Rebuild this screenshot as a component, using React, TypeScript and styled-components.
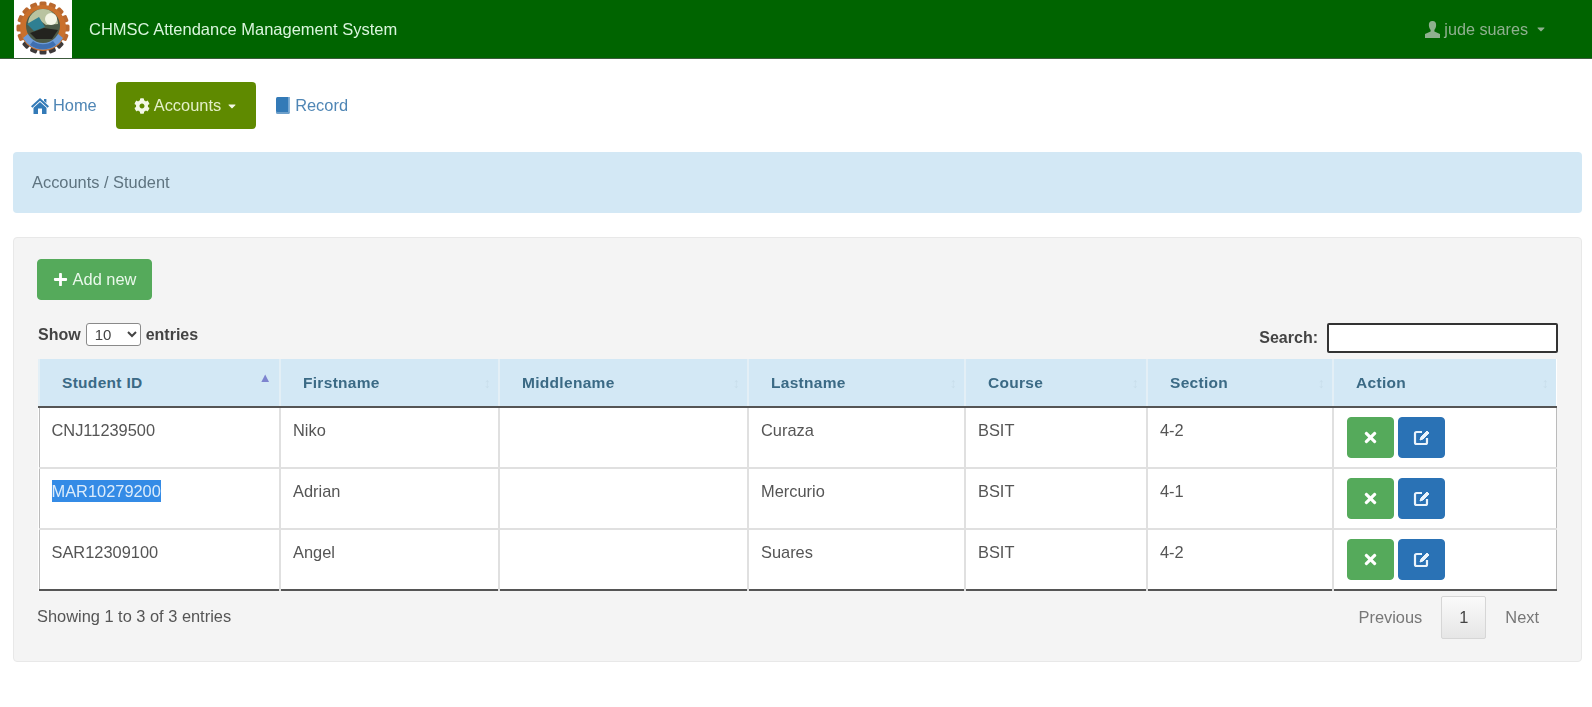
import React from 'react';
import styled, { createGlobalStyle } from 'styled-components';
import { FaCaretDown, FaCog, FaPlus, FaTimes } from 'react-icons/fa';

const Global = createGlobalStyle`
  html, body { margin: 0; padding: 0; background: #fff; }
  body {
    font-family: "Liberation Sans", Arial, sans-serif;
    font-size: 16.4px;
    color: #555;
  }
`;

// the reference is a frame out of a video, everything is a bit soft
const Page = styled.div`
  filter: blur(0.4px);
`;

const Navbar = styled.header`
  display: flex;
  align-items: center;
  justify-content: space-between;
  height: 59px;
  box-sizing: border-box;
  padding: 0 45px 0 14px;
  background: #006400;
  border-bottom: 1px solid #3c5a3c;
`;

const Brand = styled.div`
  display: flex;
  align-items: center;
  gap: 17px;
  height: 100%;
  color: #d9f5dc;
  font-size: 16.5px;
`;

const Logo = styled.svg`
  display: block;
  width: 58px;
  height: 58px;
  background: #fff;
`;

const UserMenu = styled.div`
  display: flex;
  align-items: center;
  gap: 3px;
  color: #8fb08f;
  font-size: 16.2px;
`;

const Tabs = styled.nav`
  display: flex;
  align-items: center;
  gap: 1px;
  margin: 23px 0;
  padding-left: 13px;
`;

const Tab = styled.a<{ $active?: boolean }>`
  display: flex;
  align-items: center;
  gap: 4px;
  height: 47px;
  box-sizing: border-box;
  padding: 0 18px;
  border-radius: 4px;
  font-size: 16.4px;
  color: ${(p) => (p.$active ? '#e4efc8' : '#4f86b5')};
  background: ${(p) => (p.$active ? '#5f8a00' : 'transparent')};
  svg { color: ${(p) => (p.$active ? '#f4f8e6' : '#337ab7')}; }
`;

const Breadcrumb = styled.div`
  display: flex;
  align-items: center;
  height: 61px;
  box-sizing: border-box;
  margin: 0 10px 24px 13px;
  padding-left: 19px;
  background: #d3e8f5;
  border-radius: 4px;
  color: #5f7480;
`;

const Well = styled.section`
  height: 425px;
  box-sizing: border-box;
  margin: 0 10px 0 13px;
  padding: 21px 23px 0;
  background: #f4f4f4;
  border: 1px solid #e8e8e8;
  border-radius: 4px;
`;

const Button = styled.button<{ $color: string; $width: number }>`
  display: inline-flex;
  align-items: center;
  justify-content: center;
  gap: 5px;
  width: ${(p) => p.$width}px;
  height: 41px;
  padding: 0;
  border: 1px solid ${(p) => p.$color};
  border-radius: 4px;
  background: ${(p) => p.$color};
  color: #e9f8ea;
  font: inherit;
`;

const Controls = styled.div`
  display: flex;
  justify-content: space-between;
  align-items: flex-start;
  height: 59px;
  padding-top: 23px;
  box-sizing: border-box;
  margin-left: 1px;
  font-weight: bold;
  font-size: 16px;
  color: #444;
`;

const Length = styled.label`
  display: flex;
  align-items: center;
  gap: 5px;
  height: 23px;
`;

const Select = styled.select`
  width: 55px;
  height: 23px;
  box-sizing: border-box;
  padding: 0 0 0 4px;
  border: 1px solid #8a8a8a;
  border-radius: 3px;
  background: #fff;
  color: #444;
  font: 15px "Liberation Sans", Arial, sans-serif;
`;

const Search = styled.label`
  display: flex;
  align-items: center;
  gap: 9px;
  height: 30px;
`;

const SearchInput = styled.input`
  width: 231px;
  height: 30px;
  box-sizing: border-box;
  border: 2px solid #333;
  border-radius: 2px;
  background: #fff;
`;

const Table = styled.table`
  width: 1517px;
  table-layout: fixed;
  border-collapse: collapse;
  margin-left: 1px;
  background: #fff;
  border-bottom: 2px solid #555;
`;

const Col = styled.col<{ $width: number }>`
  width: ${(p) => p.$width}px;
`;

const HeadCell = styled.th`
  position: relative;
  height: 48px;
  box-sizing: border-box;
  padding: 0 0 0 22px;
  background: #d3e8f5;
  border-left: 2px solid #e3eff6;
  border-bottom: 2px solid #555;
  color: #3b6a85;
  font-size: 15.5px;
  letter-spacing: 0.3px;
  text-align: left;
`;

const SortMark = styled.span<{ $active?: boolean }>`
  position: absolute;
  right: 7px;
  top: ${(p) => (p.$active ? 11 : 16)}px;
  font-size: ${(p) => (p.$active ? 13 : 14)}px;
  color: ${(p) => (p.$active ? '#7d84cf' : '#c9deeb')};
`;

const Cell = styled.td`
  height: 61px;
  box-sizing: border-box;
  padding: 13px 12px 0;
  vertical-align: top;
  border: 2px solid #e0e0e0;
  border-top-width: 0;
  color: #555;
  &:first-child { border-left: 1px solid #bbb; }
  &:last-child { border-right: 1px solid #bbb; padding-top: 9px; }
  tr:last-child & { border-bottom: 0; }
`;

const Actions = styled.div`
  display: flex;
  gap: 4px;
  margin-left: 1px;
`;

const Selected = styled.span`
  background: #348be6;
  color: #dcecfb;
  padding: 2px 0;
`;

const Footer = styled.div`
  display: flex;
  justify-content: space-between;
  align-items: flex-start;
  padding-top: 5px;
`;

const Info = styled.div`
  padding-top: 11px;
  color: #555;
`;

const Pager = styled.div`
  display: flex;
  align-items: center;
  color: #777;
`;

const PageLink = styled.span`
  padding: 0 19px;
`;

const PageCurrent = styled.span`
  display: flex;
  align-items: center;
  justify-content: center;
  width: 45px;
  height: 43px;
  box-sizing: border-box;
  border: 1px solid #d6d6d6;
  border-radius: 2px;
  background: linear-gradient(#fafafa, #e6e6e6);
  color: #444;
`;

const columns = [
  { name: 'Student ID', width: 241 },
  { name: 'Firstname', width: 219 },
  { name: 'Middlename', width: 249 },
  { name: 'Lastname', width: 217 },
  { name: 'Course', width: 182 },
  { name: 'Section', width: 186 },
  { name: 'Action', width: 223 },
];

const students = [
  { id: 'CNJ11239500', first: 'Niko', last: 'Curaza', course: 'BSIT', section: '4-2' },
  { id: 'MAR10279200', first: 'Adrian', last: 'Mercurio', course: 'BSIT', section: '4-1', selected: true },
  { id: 'SAR12309100', first: 'Angel', last: 'Suares', course: 'BSIT', section: '4-2' },
];

function HomeIcon() {
  return (
    <svg width="18" height="16" viewBox="0 0 18 16" fill="currentColor">
      <path d="M9 0 L18 8.3 L16.6 9.7 L9 2.8 L1.4 9.7 L0 8.3 Z" />
      <path d="M13 1 H15.4 V5 L13 3 Z" />
      <path d="M9 4 L15.5 9.8 V16 H11 V10.5 H7 V16 H2.5 V9.8 Z" />
    </svg>
  );
}

function BookIcon() {
  return (
    <svg width="16" height="17" viewBox="0 0 16 17">
      <path d="M1 1.5 Q1 0 2.5 0 H15 V15.5 H2.5 Q1 15.5 1 14 Z" fill="#337ab7" />
      <path d="M13.2 0 H15 V15.5 H13.2 Z" fill="#86b2d8" />
      <path d="M1 15 H14.5 V17 H2.5 Q1 17 1 15.5 Z" fill="#6d9fca" />
    </svg>
  );
}

function UserIcon() {
  return (
    <svg width="17" height="17" viewBox="0 0 17 17" fill="currentColor">
      <path d="M8.5 0 C11.2 0 12.4 2 12.1 4.8 C11.9 6.8 11.2 8 10.4 8.9 V10.6 L16 13 V17 H1 V13 L6.6 10.6 V8.9 C5.8 8 5.1 6.8 4.9 4.8 C4.6 2 5.8 0 8.5 0 Z" />
    </svg>
  );
}

function EditIcon() {
  return (
    <svg width="18" height="17" viewBox="0 0 18 17" fill="none" stroke="#eaf3fb" strokeWidth="2.2">
      <path d="M9 3 H3.5 Q2 3 2 4.5 V13.5 Q2 15 3.5 15 H12.5 Q14 15 14 13.5 V9" />
      <path d="M7 11 L8 8 L14 2 L16 4 L10 10 Z" fill="#eaf3fb" strokeWidth="1" />
    </svg>
  );
}

function SchoolLogo() {
  const teeth = Array.from({ length: 16 }, (_, i) => (i * 360) / 16);
  return (
    <Logo viewBox="0 0 58 58">
      {teeth.map((a) => (
        <rect key={a} x="25.5" y="1.5" width="7" height="8" rx="1.5" fill={a > 115 && a < 245 ? '#3d3a3a' : '#b9682f'} transform={`rotate(${a} 29 28)`} />
      ))}
      <circle cx="29" cy="28" r="23" fill="#c9702c" />
      <path d="M9 38 A23 23 0 0 0 49 38 L43 33 A17 17 0 0 1 15 33 Z" fill="#6d9bd6" />
      <path d="M16 45 A22 22 0 0 0 42 45 L39 41 A17 17 0 0 1 19 41 Z" fill="#3f6fb0" />
      <circle cx="29" cy="26" r="17" fill="#4c5a48" />
      <path d="M14 24 A15 15 0 0 1 44 24 L32 25 L24 19 Z" fill="#b9c3a0" />
      <path d="M13 24 L25 17 L31 27 L20 31 Z" fill="#2f7f92" />
      <path d="M16 33 L30 28 L44 30 L38 39 L22 39 Z" fill="#23231f" />
      <circle cx="37" cy="19" r="6" fill="#f4f5e6" />
    </Logo>
  );
}

function App() {
  return (
    <Page>
      <Global />
      <Navbar>
        <Brand>
          <SchoolLogo />
          CHMSC Attendance Management System
        </Brand>
        <UserMenu>
          <UserIcon />
          jude suares
          <FaCaretDown size={12} style={{ marginLeft: 4 }} />
        </UserMenu>
      </Navbar>
      <Tabs>
        <Tab><HomeIcon />Home</Tab>
        <Tab $active><FaCog size={16} />Accounts<FaCaretDown size={12} style={{ marginLeft: 1 }} /></Tab>
        <Tab><BookIcon />Record</Tab>
      </Tabs>
      <Breadcrumb>Accounts / Student</Breadcrumb>
      <Well>
        <Button $color="#55aa5b" $width={115}><FaPlus size={15} color="#fff" />Add new</Button>
        <Controls>
          <Length>
            Show
            <Select defaultValue="10"><option>10</option></Select>
            entries
          </Length>
          <Search>
            Search:
            <SearchInput />
          </Search>
        </Controls>
        <Table>
          <colgroup>
            {columns.map((c) => <Col key={c.name} $width={c.width} />)}
          </colgroup>
          <thead>
            <tr>
              {columns.map((c, i) => (
                <HeadCell key={c.name}>
                  {c.name}
                  <SortMark $active={i === 0}>{i === 0 ? '▲' : '↕'}</SortMark>
                </HeadCell>
              ))}
            </tr>
          </thead>
          <tbody>
            {students.map((s) => (
              <tr key={s.id}>
                <Cell>{s.selected ? <Selected>{s.id}</Selected> : s.id}</Cell>
                <Cell>{s.first}</Cell>
                <Cell />
                <Cell>{s.last}</Cell>
                <Cell>{s.course}</Cell>
                <Cell>{s.section}</Cell>
                <Cell>
                  <Actions>
                    <Button $color="#55aa5b" $width={47}><FaTimes size={17} color="#fff" /></Button>
                    <Button $color="#2a72b5" $width={47}><EditIcon /></Button>
                  </Actions>
                </Cell>
              </tr>
            ))}
          </tbody>
        </Table>
        <Footer>
          <Info>Showing 1 to 3 of 3 entries</Info>
          <Pager>
            <PageLink>Previous</PageLink>
            <PageCurrent>1</PageCurrent>
            <PageLink>Next</PageLink>
          </Pager>
        </Footer>
      </Well>
    </Page>
  );
}

export default App;
